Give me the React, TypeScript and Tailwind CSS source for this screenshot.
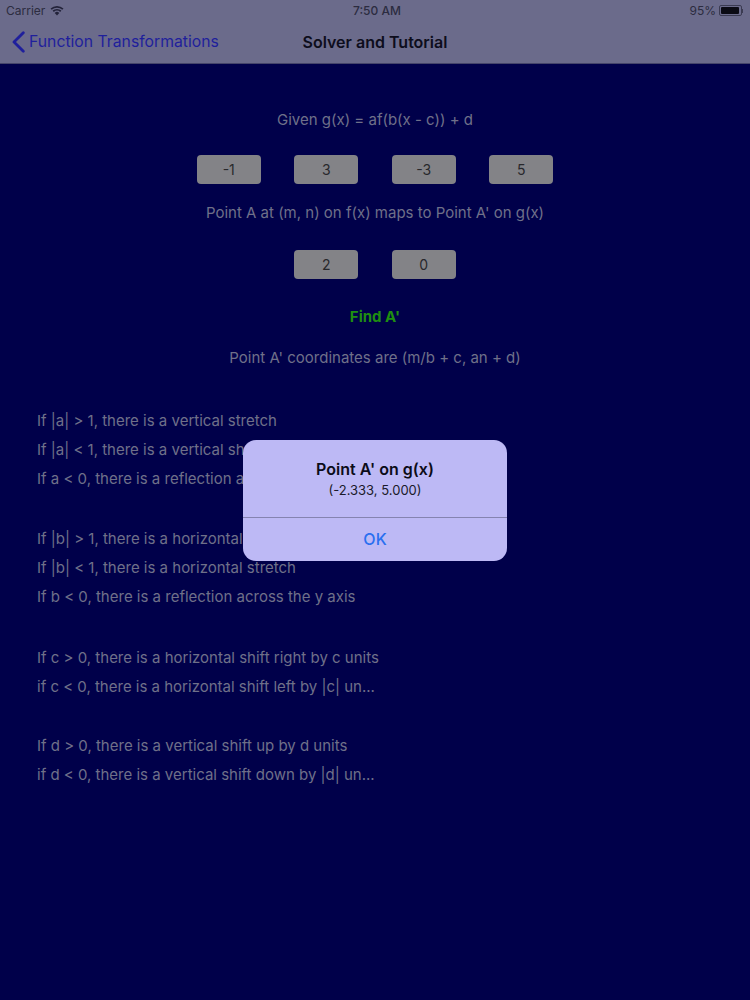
const font = { fontFamily: 'Inter, "Liberation Sans", sans-serif' };

function ValueBox({ value }: { value: string }) {
  return (
    <div className="flex h-[29px] w-[64px] items-center justify-center rounded-[4px] bg-[#838387] text-[14px] text-[#28282c]">
      {value}
    </div>
  );
}

function Rule({ text, className = '' }: { text: string; className?: string }) {
  return <div className={`flex h-[29.3px] items-center text-[15px] text-[#6f7089] ${className}`}>{text}</div>;
}

export default function App() {
  return (
    <div className="relative h-[1000px] w-[750px] overflow-hidden bg-[#00004a]" style={font}>
      <div className="h-[64px] border-b border-[#45456a] bg-[#6b6b8b]">
        <div className="flex h-[21px] items-center justify-between pl-[6px] pr-[7px] text-[12px] text-[#2c2c40]">
          <div className="flex items-center gap-[5px]">
            <span>Carrier</span>
            <svg width="14" height="11" viewBox="0 0 14 11" fill="#23233a">
              <path d="M7 10.5 4.7 7.9a3.4 3.4 0 0 1 4.6 0L7 10.5Z" />
              <path d="M3.8 6.9 2.6 5.6a6.6 6.6 0 0 1 8.8 0l-1.2 1.3a4.9 4.9 0 0 0-6.4 0Z" />
              <path d="M1.7 4.7.5 3.4a9.7 9.7 0 0 1 13 0l-1.2 1.3a8 8 0 0 0-10.6 0Z" />
            </svg>
          </div>
          <span className="font-medium">7:50 AM</span>
          <div className="flex items-center gap-[3px]">
            <span>95%</span>
            <div className="flex items-center">
              <div className="h-[11px] w-[23px] rounded-[2px] border border-[#3b3b52] p-[1px]">
                <div className="h-full w-[95%] rounded-[1px] bg-[#0b0b14]" />
              </div>
              <div className="h-[4px] w-[1px] bg-[#3b3b52]" />
            </div>
          </div>
        </div>
        <div className="relative flex h-[42px] items-center justify-center">
          <div className="absolute left-[12px] top-[9px] flex items-center gap-[4px] text-[#1f1f9c]">
            <svg width="13" height="22" viewBox="0 0 13 22" fill="none" stroke="currentColor" strokeWidth="2.8" strokeLinecap="round" strokeLinejoin="round">
              <path d="M11.3 1.7 2 11l9.3 9.3" />
            </svg>
            <span className="text-[15.75px]">Function Transformations</span>
          </div>
          <span className="text-[16px] font-semibold text-[#0d0d1c]">Solver and Tutorial</span>
        </div>
      </div>

      <div className="flex flex-col items-center pt-[42px]">
        <div className="flex h-[28px] items-center text-[15px] text-[#6f7089]">Given g(x) = af(b(x - c)) + d</div>
        <div className="mt-[21px] flex gap-[33.5px]">
          <ValueBox value="-1" />
          <ValueBox value="3" />
          <ValueBox value="-3" />
          <ValueBox value="5" />
        </div>
        <div className="mt-[15px] flex h-[28px] items-center text-[15px] text-[#6f7089]">
          Point A at (m, n) on f(x) maps to Point A' on g(x)
        </div>
        <div className="mt-[23px] flex gap-[33.5px]">
          <ValueBox value="2" />
          <ValueBox value="0" />
        </div>
        <div className="mt-[24px] flex h-[29px] items-center text-[15px] font-bold text-[#1f8f10]">Find A'</div>
        <div className="mt-[12px] flex h-[28px] items-center text-[15px] text-[#6f7089]">
          Point A' coordinates are (m/b + c, an + d)
        </div>
      </div>

      <div className="mt-[34.4px] flex flex-col pl-[37px]">
        <Rule text="If |a| > 1, there is a vertical stretch" />
        <Rule text="If |a| < 1, there is a vertical shrink" />
        <Rule text="If a < 0, there is a reflection across the x axis" />
        <Rule text="If |b| > 1, there is a horizontal shrink" className="mt-[30px]" />
        <Rule text="If |b| < 1, there is a horizontal stretch" />
        <Rule text="If b < 0, there is a reflection across the y axis" />
        <Rule text="If c > 0, there is a horizontal shift right by c units" className="mt-[31.6px]" />
        <Rule text="if c < 0, there is a horizontal shift left by |c| un..." />
        <Rule text="If d > 0, there is a vertical shift up by d units" className="mt-[29.4px]" />
        <Rule text="if d < 0, there is a vertical shift down by |d| un..." />
      </div>

      <div className="absolute left-[243px] top-[440px] w-[264px] rounded-[13px] bg-[#bdb9f5]">
        <div className="flex h-[78px] flex-col items-center border-b border-[#8583b0] pt-[19px]">
          <span className="text-[16px] font-semibold leading-[20px] text-[#0c0c18]">Point A' on g(x)</span>
          <span className="mt-[2px] text-[13px] leading-[18px] text-[#1a1a2a]">(-2.333, 5.000)</span>
        </div>
        <div className="flex h-[43px] items-center justify-center pb-[1px] text-[16px] font-medium text-[#2a6ff0]">OK</div>
      </div>
    </div>
  );
}
